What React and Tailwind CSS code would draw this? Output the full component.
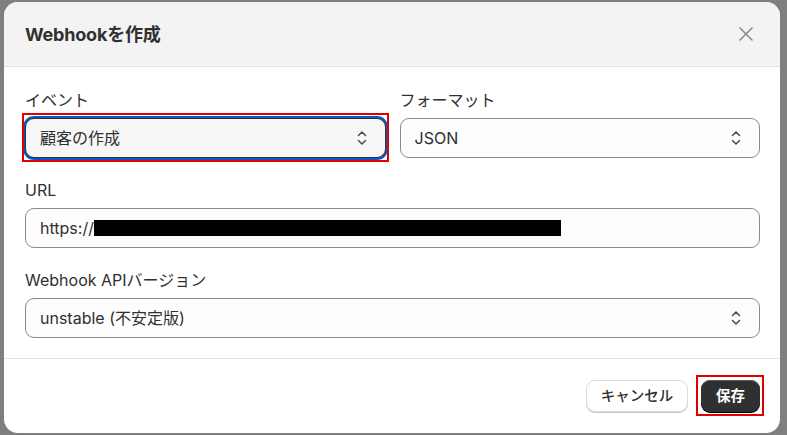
import React from "react";

const font = { fontFamily: 'Inter, "Noto Sans CJK JP", sans-serif' };

function Chevron() {
  return (
    <svg width="12" height="18" viewBox="0 0 12 18" fill="none" stroke="#4a4a4a" strokeWidth="1.5" strokeLinecap="round" strokeLinejoin="round">
      <path d="M2.5 6.5 L6 3 L9.5 6.5" />
      <path d="M2.5 11.5 L6 15 L9.5 11.5" />
    </svg>
  );
}

function Label({ children }) {
  return <div className="h-[20px] leading-[20px] text-[16px] text-[#303030] mb-[8px]">{children}</div>;
}

export default function App() {
  return (
    <div className="w-[787px] h-[435px] bg-[#7f7f7f] pt-[2px] pl-[4px] overflow-hidden relative" style={font}>
      <div className="w-[776px] h-[431px] rounded-[14px] bg-white overflow-hidden flex flex-col">
        <div className="h-[65px] shrink-0 bg-[#f3f3f3] border-b border-[#e3e3e3] flex items-center justify-between pl-[21px] pr-[26px]">
          <div className="text-[18px] font-bold text-[#303030] tracking-[-0.2px]">Webhookを作成</div>
          <svg width="16" height="16" viewBox="0 0 16 16" stroke="#8a8a8a" strokeWidth="1.6" strokeLinecap="round">
            <path d="M2 2 L14 14 M14 2 L2 14" />
          </svg>
        </div>
        <div className="pl-[21px] pr-[20px] pt-[23px] pb-[20px] flex flex-col gap-[22px] border-b border-[#e3e3e3]">
          <div className="grid grid-cols-2 gap-[14px]">
            <div>
              <Label>イベント</Label>
              <div className="h-[40px] rounded-[9px] bg-[#f7f7f7] border border-[#303030] ring-2 ring-[#005bd3] ring-offset-0 flex items-center justify-between pl-[14px] pr-[17px] text-[16px] text-[#303030]">
                <span>顧客の作成</span>
                <Chevron />
              </div>
            </div>
            <div>
              <Label>フォーマット</Label>
              <div className="h-[40px] rounded-[9px] bg-[#fdfdfd] border border-[#8a8a8a] flex items-center justify-between pl-[14px] pr-[17px] text-[16px] text-[#303030]">
                <span>JSON</span>
                <Chevron />
              </div>
            </div>
          </div>
          <div>
            <Label>URL</Label>
            <div className="h-[40px] rounded-[9px] bg-[#fdfdfd] border border-[#8a8a8a] flex items-center pl-[14px] text-[16px] text-[#303030]">
              <span>https://</span>
              <span className="inline-block w-[467px] h-[16px] bg-black"></span>
            </div>
          </div>
          <div>
            <Label>Webhook APIバージョン</Label>
            <div className="h-[40px] rounded-[9px] bg-[#fdfdfd] border border-[#8a8a8a] flex items-center justify-between pl-[14px] pr-[17px] text-[16px] text-[#303030]">
              <span>unstable (不安定版)</span>
              <Chevron />
            </div>
          </div>
        </div>
        <div className="flex-1 flex items-center justify-end pr-[20px] gap-[13px]">
          <button className="h-[32px] w-[102px] rounded-[9px] bg-white border border-[#dcdcdc] shadow-[0_1px_0_#c8c8c8] text-[14.5px] font-medium text-[#303030]">キャンセル</button>
          <button className="h-[32px] w-[59px] rounded-[9px] bg-[#303030] shadow-[inset_0_1px_0_#5a5a5a,0_1px_0_#000] text-[14.5px] font-bold text-white">保存</button>
        </div>
      </div>
      <div className="absolute left-[22px] top-[113px] w-[367px] h-[49px] border-2 border-[#e00000] pointer-events-none"></div>
      <div className="absolute left-[696px] top-[375px] w-[68px] h-[41px] border-2 border-[#e00000] pointer-events-none"></div>
    </div>
  );
}
